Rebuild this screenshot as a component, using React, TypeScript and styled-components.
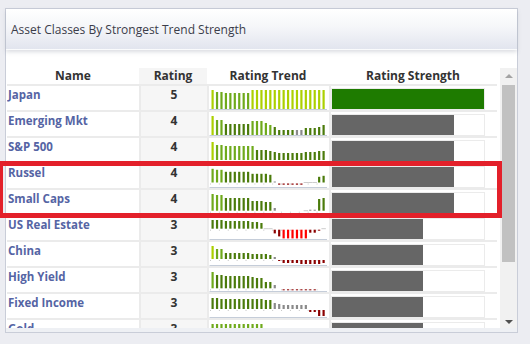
import React from 'react';
import styled, { createGlobalStyle } from 'styled-components';

const GlobalStyle = createGlobalStyle`
  html, body {
    margin: 0;
    padding: 0;
    background: #ecedf2;
  }
  body {
    font-family: "Open Sans", "Liberation Sans", sans-serif;
  }
`;

const Page = styled.div`
  position: relative;
  width: 530px;
  height: 344px;
  box-sizing: border-box;
  padding: 8px 12px 0 5px;
  overflow: hidden;
`;

const Panel = styled.div`
  width: 513px;
  height: 325px;
  box-sizing: border-box;
  border: 1px solid #c9cdd8;
  background: #eef0f4;
  display: flex;
  flex-direction: column;
`;

const Header = styled.div`
  position: relative;
  z-index: 1;
  flex: none;
  height: 41px;
  box-sizing: border-box;
  display: flex;
  align-items: center;
  padding-left: 5px;
  background: linear-gradient(to bottom, #ffffff 0%, #f5f6f9 45%, #e2e5ee 100%);
  border-bottom: 1px solid #fafbfc;
  box-shadow: 0 2px 4px rgba(110, 120, 140, 0.25);
  font-size: 12px;
  color: #3b3d4a;
`;

const Body = styled.div`
  flex: none;
  height: 278px;
  box-sizing: border-box;
  background: #fff;
  display: flex;
  gap: 3px;
  padding: 18px 0 0 1px;
`;

const Table = styled.div`
  width: 490px;
  height: 260px;
  overflow: hidden;
  display: grid;
  grid-template-columns: 132px 66px 120px 166px;
  grid-template-rows: 16px;
  grid-auto-rows: 24px;
  gap: 2px;
  background: #ebebeb;
  align-content: start;
`;

const HeadRow = styled.div`
  grid-column: 1 / -1;
  display: grid;
  grid-template-columns: 132px 68px 122px 168px;
  background: #fff;
`;

const HeadCell = styled.div<{ $shade?: boolean }>`
  background: ${p => (p.$shade ? '#f5f5f5' : '#fff')};
  text-align: center;
  font-size: 12px;
  font-weight: 700;
  line-height: 16px;
  color: #333;
`;

const NameCell = styled.div`
  background: #fff;
  padding: 1px 0 0 1px;
  font-size: 11.5px;
  font-weight: 700;
  line-height: 15px;
  color: #5564a4;
  white-space: nowrap;
`;

const RatingCell = styled.div`
  background: #f6f6f6;
  padding-top: 1px;
  text-align: center;
  font-size: 12px;
  font-weight: 700;
  line-height: 15px;
  color: #333;
`;

const TrendCell = styled.div`
  background: #fff;
  padding-top: 2px;

  svg {
    display: block;
  }
`;

const StrengthCell = styled.div`
  background: #fff;
  padding-top: 2px;
`;

const Track = styled.div`
  width: 154px;
  height: 22px;
  box-sizing: border-box;
  border: 1px solid #ebebeb;
`;

const Fill = styled.div<{ $top: boolean }>`
  height: 20px;
  background: ${p => (p.$top ? '#1e7b00' : '#666666')};
`;

const Scrollbar = styled.div`
  width: 17px;
  height: 260px;
  background: #f1f1f1;
  display: flex;
  flex-direction: column;
`;

const Arrow = styled.div<{ $down?: boolean }>`
  flex: none;
  height: 17px;
  display: flex;
  align-items: center;
  justify-content: center;

  &::before {
    content: '';
    border-left: 4px solid transparent;
    border-right: 4px solid transparent;
    ${p =>
      p.$down
        ? 'border-top: 4px solid #505050; margin-top: 4px;'
        : 'border-bottom: 4px solid #a3a3a3; margin-top: -1px;'}
  }
`;

const Thumb = styled.div`
  flex: none;
  height: 177px;
  margin: 0 2px;
  background: #c1c1c1;
`;

const Spacer = styled.div`
  flex: 1;
`;

const Highlight = styled.div`
  position: absolute;
  left: -2px;
  top: 161px;
  width: 504px;
  height: 57px;
  box-sizing: border-box;
  border: 5px solid #e3202a;
  pointer-events: none;
`;

type Bar = [number, string];

const COLORS: Record<string, string> = {
  L: '#acd000',
  M: '#6faa1c',
  D: '#4b7b0b',
  G: '#8a8a8a',
  R: '#8b0000',
  X: '#ff0000',
  Z: '#cccccc',
};

// "12.7Dx6" -> six dark bars 12.7px high; negatives hang below the zero line
const parse = (s: string): Bar[] =>
  s.split(' ').flatMap(tok => {
    const m = tok.match(/^(-?[\d.]+)([A-Z_])(?:x(\d+))?$/);
    if (!m) return [];
    return Array(m[3] ? Number(m[3]) : 1).fill([Number(m[1]), m[2]]);
  });

const STEP = 4.44;
const BAR_W = 2.2;

const Sparkline: React.FC<{ zero: number; spec: string }> = ({ zero, spec }) => {
  const bars = parse(spec);
  return (
    <svg width="118" height="22" viewBox="0 0 118 22">
      <rect x="0.5" y="21" width="117.5" height="1" fill="#c5cdd9" />
      {zero < 20 &&
        bars.map((_, i) =>
          i % 2 === 0 ? (
            <rect key={'d' + i} x={1 + i * STEP} y={zero + 1} width="1" height="1" fill="#c8c8c8" />
          ) : null
        )}
      {bars.map(([h, c], i) => {
        const x = 2.5 + i * STEP;
        if (c === '_') return null;
        if (c === 'Z')
          return <rect key={i} x={x - 1.1} y={zero - 0.5} width={STEP} height="1" fill={COLORS.Z} />;
        if (h >= 0)
          return <rect key={i} x={x} y={zero - h} width={BAR_W} height={Math.max(h, 1)} fill={COLORS[c]} />;
        return <rect key={i} x={x} y={zero + 1} width={BAR_W} height={-h} fill={COLORS[c]} />;
      })}
    </svg>
  );
};

const rows = [
  { name: 'Japan', rating: 5, zero: 21, trend: '19L 17M 17M 16Mx6 19Lx17' },
  { name: 'Emerging Mkt', rating: 4, zero: 21, trend: '19L 15M 15M 11Dx6 14Mx3 12M 10M 8D 5Dx4 5Gx2 7Dx3 8D 10D' },
  { name: 'S&P 500', rating: 4, zero: 20, trend: '18L 15M 15M 14Mx7 10Dx3 9D 8D 7Dx6 8Dx3 9Dx2' },
  { name: 'Russel', rating: 4, zero: 16.5, trend: '13.7M 12.7M 12.7M 10.7Dx6 8.7Dx4 7.7D 1G -1.2Rx6 0Zx3 5.7D 6.7D' },
  { name: 'Small Caps', rating: 4, zero: 18.7, trend: '16.7M 15.7M 15.7M 12.7Dx6 9.7Dx3 8.7Dx2 2.7G 0_x6 0Z 1G 1G 11.7D 12.7D' },
  { name: 'US Real Estate', rating: 3, zero: 10.7, trend: '8.7Dx3 7.7Dx6 6.7Dx2 5.7D 0Zx2 -3.7R -6.7R -8.7Xx6 -3Rx2 -1R 0Z' },
  { name: 'China', rating: 3, zero: 15, trend: '13L 10M 10M 6Dx6 5Dx4 4D 2G -1R -3Rx4 -4Rx5 -3R' },
  { name: 'High Yield', rating: 3, zero: 18.3, trend: '16.3M 13.3Dx2 12.3Dx6 11.3D 10.3Dx2 6.3Dx2 3.3G 0_ -1Rx8 0_x2' },
  { name: 'Fixed Income', rating: 3, zero: 13, trend: '11Dx2 10Dx10 9Dx2 6G 5G 4Gx6 -2Rx2 -6Rx2' },
  { name: 'Gold', rating: 3, zero: 18, trend: '16Mx12 10Dx14' },
];

const App: React.FC = () => (
  <>
    <GlobalStyle />
    <Page>
      <Panel>
        <Header>Asset Classes By Strongest Trend Strength</Header>
        <Body>
          <Table>
            <HeadRow>
              <HeadCell>Name</HeadCell>
              <HeadCell $shade>Rating</HeadCell>
              <HeadCell>Rating Trend</HeadCell>
              <HeadCell>Rating Strength</HeadCell>
            </HeadRow>
            {rows.map(r => (
              <React.Fragment key={r.name}>
                <NameCell>{r.name}</NameCell>
                <RatingCell>{r.rating}</RatingCell>
                <TrendCell>
                  <Sparkline zero={r.zero} spec={r.trend} />
                </TrendCell>
                <StrengthCell>
                  <Track>
                    <Fill $top={r.rating === 5} style={{ width: `${r.rating * 20}%` }} />
                  </Track>
                </StrengthCell>
              </React.Fragment>
            ))}
          </Table>
          <Scrollbar>
            <Arrow />
            <Thumb />
            <Spacer />
            <Arrow $down />
          </Scrollbar>
        </Body>
      </Panel>
      <Highlight />
    </Page>
  </>
);

export default App;
